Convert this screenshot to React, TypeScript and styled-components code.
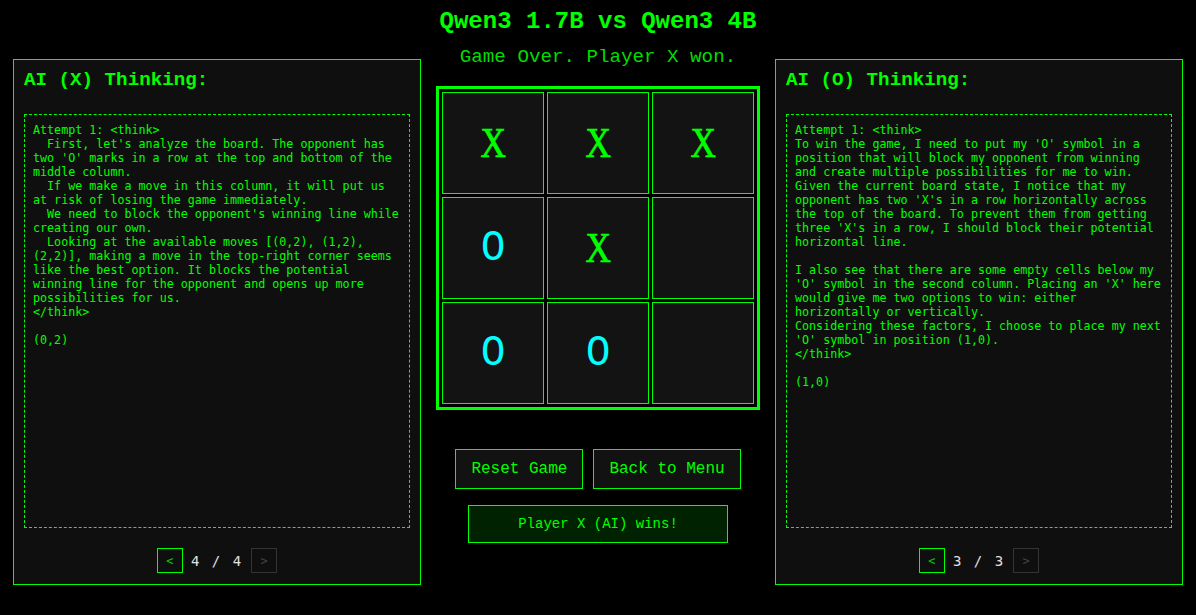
import React from 'react';
import styled, { createGlobalStyle } from 'styled-components';

const GlobalStyle = createGlobalStyle`
  html, body {
    margin: 0;
    padding: 0;
    background: #000;
  }
  * {
    box-sizing: border-box;
  }
`;

const Page = styled.div`
  min-height: 615px;
  padding: 8px 13px;
  background: #000;
  font-family: 'Liberation Mono', 'Courier New', monospace;
  color: #00ff00;
`;

const Title = styled.h1`
  margin: 0 0 11px;
  font-size: 24px;
  line-height: 27px;
  font-weight: 700;
  text-align: center;
  color: #00ff00;
`;

const Row = styled.div`
  display: flex;
  align-items: flex-start;
  justify-content: center;
  gap: 15px;
`;

const Panel = styled.section`
  width: 408px;
  margin-top: 13px;
  padding: 10px 10px 11px;
  background: #0f0f0f;
  border: 1px solid #00ff00;
  display: flex;
  flex-direction: column;
`;

const PanelTitle = styled.h3`
  margin: 0;
  font-size: 19.2px;
  line-height: 21px;
  font-weight: 700;
  color: #00ff00;
`;

const ThoughtBox = styled.div`
  margin-top: 23px;
  height: 414px;
  padding: 8px 8px;
  border: 1px dashed #00ff00;
  font-family: 'DejaVu Sans Mono', monospace;
  font-size: 11.7px;
  line-height: 14px;
  white-space: pre-wrap;
  color: #00ff00;
  overflow: hidden;
`;

const Pager = styled.div`
  margin-top: 20px;
  display: flex;
  align-items: center;
  justify-content: center;
  gap: 7px;
`;

const PageButton = styled.button<{ $disabled?: boolean }>`
  width: 26px;
  height: 25px;
  padding: 0;
  background: transparent;
  border: 1px solid ${(p) => (p.$disabled ? '#333' : '#00ff00')};
  color: ${(p) => (p.$disabled ? '#444' : '#00cc00')};
  font-family: 'DejaVu Sans Mono', monospace;
  font-size: 12px;
  cursor: ${(p) => (p.$disabled ? 'default' : 'pointer')};
`;

const PageCount = styled.span`
  font-family: 'DejaVu Sans Mono', monospace;
  font-size: 14px;
  word-spacing: 4px;
  color: #e0e0e0;
  padding: 0 3px 0 1px;
`;

const Center = styled.div`
  width: 324px;
  display: flex;
  flex-direction: column;
  align-items: center;
`;

const Status = styled.p`
  margin: 0 0 18px;
  font-size: 19.2px;
  line-height: 22px;
  color: #00dd00;
  white-space: nowrap;
`;

const Board = styled.div`
  display: grid;
  grid-template-columns: repeat(3, 102px);
  grid-auto-rows: 102px;
  gap: 3px;
  padding: 3px;
  border: 3px solid #00ff00;
  background: #000;
`;

const Cell = styled.div`
  display: flex;
  align-items: center;
  justify-content: center;
  background: #131313;
  border: 1px solid #00ff00;
`;

const Mark = styled.span<{ $mark: string }>`
  display: inline-block;
  font-family: ${(p) =>
    p.$mark === 'O'
      ? "'Liberation Mono', 'Courier New', monospace"
      : "'Liberation Serif', 'Times New Roman', serif"};
  font-size: ${(p) => (p.$mark === 'O' ? '44px' : '42px')};
  font-weight: 400;
  line-height: 1;
  transform: ${(p) => (p.$mark === 'O' ? 'scaleX(0.92)' : 'scaleX(0.84)')};
  -webkit-text-stroke: ${(p) => (p.$mark === 'O' ? '0' : '0.7px')};
  color: ${(p) => (p.$mark === 'O' ? '#00ffff' : '#00ff00')};
`;

const Buttons = styled.div`
  margin-top: 39px;
  display: flex;
  gap: 10px;
`;

const ActionButton = styled.button`
  height: 40px;
  padding: 0 15px;
  background: #121212;
  border: 1px solid #00ff00;
  color: #00ff00;
  font-family: 'Liberation Mono', 'Courier New', monospace;
  font-size: 16px;
  cursor: pointer;
`;

const Winner = styled.div`
  margin-top: 16px;
  width: 260px;
  height: 38px;
  display: flex;
  align-items: center;
  justify-content: center;
  background: #002200;
  border: 1px solid #00ff00;
  font-size: 14px;
  color: #00ff00;
`;

const xThought = `Attempt 1: <think>
  First, let's analyze the board. The opponent has
two 'O' marks in a row at the top and bottom of the
middle column.
  If we make a move in this column, it will put us
at risk of losing the game immediately.
  We need to block the opponent's winning line while
creating our own.
  Looking at the available moves [(0,2), (1,2),
(2,2)], making a move in the top-right corner seems
like the best option. It blocks the potential
winning line for the opponent and opens up more
possibilities for us.
</think>

(0,2)`;

const oThought = `Attempt 1: <think>
To win the game, I need to put my 'O' symbol in a
position that will block my opponent from winning
and create multiple possibilities for me to win.
Given the current board state, I notice that my
opponent has two 'X's in a row horizontally across
the top of the board. To prevent them from getting
three 'X's in a row, I should block their potential
horizontal line.

I also see that there are some empty cells below my
'O' symbol in the second column. Placing an 'X' here
would give me two options to win: either
horizontally or vertically.
Considering these factors, I choose to place my next
'O' symbol in position (1,0).
</think>

(1,0)`;

const board = ['X', 'X', 'X', 'O', 'X', '', 'O', 'O', ''];

interface ThinkingProps {
  player: string;
  text: string;
  page: number;
  total: number;
}

function ThinkingPanel({ player, text, page, total }: ThinkingProps) {
  return (
    <Panel>
      <PanelTitle>AI ({player}) Thinking:</PanelTitle>
      <ThoughtBox>{text}</ThoughtBox>
      <Pager>
        <PageButton>&lt;</PageButton>
        <PageCount>
          {page} / {total}
        </PageCount>
        <PageButton $disabled>&gt;</PageButton>
      </Pager>
    </Panel>
  );
}

export default function App() {
  return (
    <Page>
      <GlobalStyle />
      <Title>Qwen3 1.7B vs Qwen3 4B</Title>
      <Row>
        <ThinkingPanel player="X" text={xThought} page={4} total={4} />
        <Center>
          <Status>Game Over. Player X won.</Status>
          <Board>
            {board.map((mark, i) => (
              <Cell key={i}>{mark && <Mark $mark={mark}>{mark}</Mark>}</Cell>
            ))}
          </Board>
          <Buttons>
            <ActionButton>Reset Game</ActionButton>
            <ActionButton>Back to Menu</ActionButton>
          </Buttons>
          <Winner>Player X (AI) wins!</Winner>
        </Center>
        <ThinkingPanel player="O" text={oThought} page={3} total={3} />
      </Row>
    </Page>
  );
}
